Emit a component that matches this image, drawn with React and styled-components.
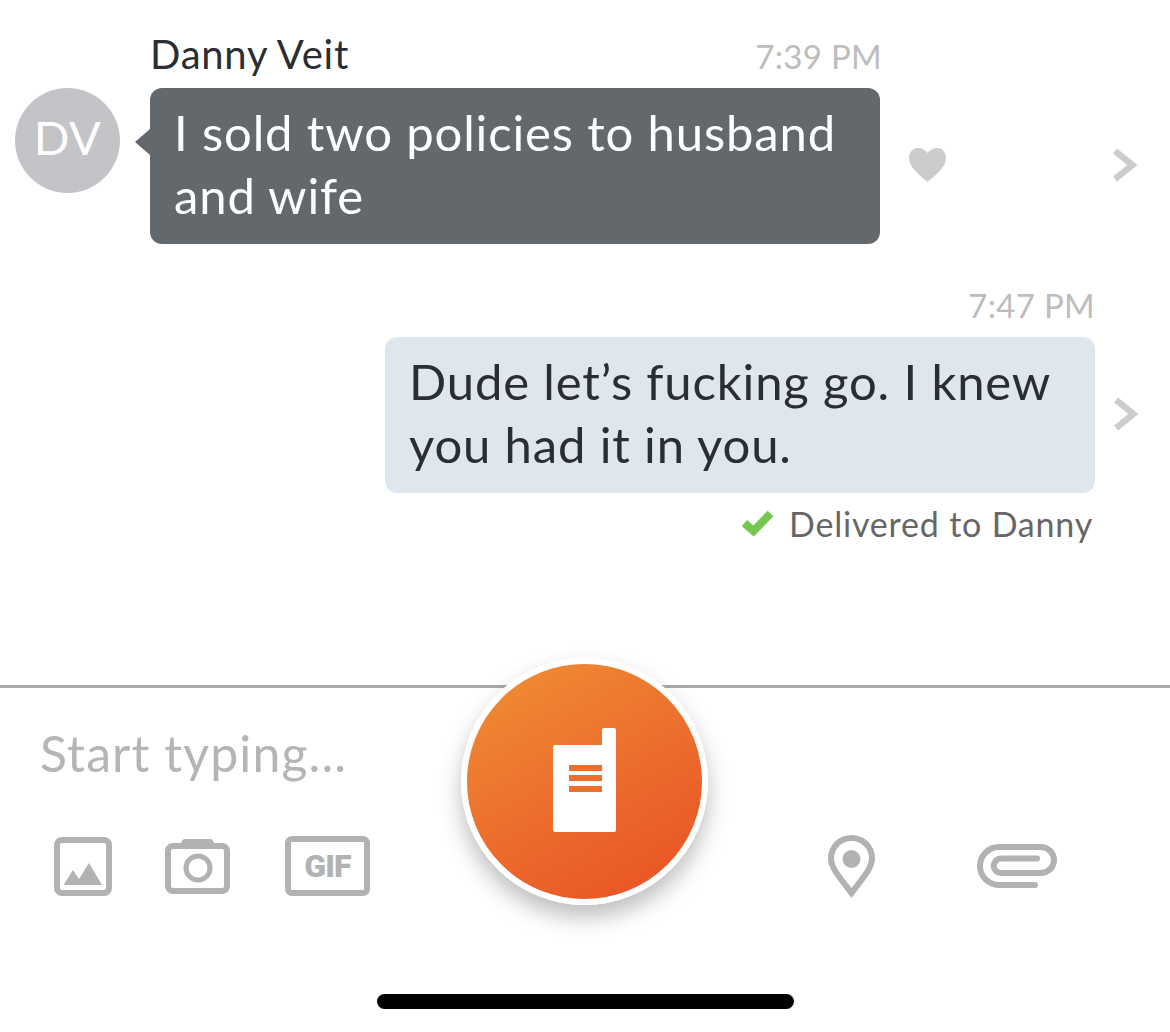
import React from "react";
import styled, { createGlobalStyle } from "styled-components";

const Global = createGlobalStyle`
  html, body { margin: 0; padding: 0; background: #fff; }
  body { font-family: "Lato", "Open Sans", sans-serif; }
`;

const Page = styled.div`
  width: 1170px;
  height: 1032px;
  display: flex;
  flex-direction: column;
  overflow: hidden;
  background: #fff;
`;

const Thread = styled.main`
  height: 685px;
  padding-top: 32px;
  box-sizing: border-box;
  display: flex;
  flex-direction: column;
`;

const MessageHead = styled.div`
  display: flex;
  justify-content: space-between;
  align-items: center;
  box-sizing: border-box;
  height: ${(p) => p.$height}px;
  width: ${(p) => p.$width}px;
  margin-left: ${(p) => p.$left}px;
  padding-bottom: ${(p) => p.$pad}px;
`;

const Name = styled.span`
  font-size: 40px;
  letter-spacing: 0.75px;
  color: #2a2e33;
  margin-left: -1px;
`;

const Time = styled.span`
  font-size: 33px;
  letter-spacing: 0.3px;
  color: #bdbdbd;
  margin: 4px -2px 0 auto;
`;

const Row = styled.div`
  display: flex;
  align-items: center;
  margin-left: ${(p) => p.$left}px;
  margin-bottom: ${(p) => p.$bottom || 0}px;
`;

const Avatar = styled.div`
  width: 105px;
  height: 105px;
  box-sizing: border-box;
  padding-bottom: 8px;
  border-radius: 50%;
  background: #c4c4c8;
  color: #fff;
  font-size: 47px;
  letter-spacing: 0.5px;
  font-weight: 400;
  display: flex;
  align-items: center;
  justify-content: center;
  align-self: flex-start;
  margin-right: 30px;
`;

const Bubble = styled.div`
  position: relative;
  box-sizing: border-box;
  width: ${(p) => p.$width}px;
  height: 156px;
  padding: 13px 24px;
  border-radius: 12px;
  font-size: 49px;
  line-height: 63px;
  letter-spacing: 0.85px;
  background: ${(p) => (p.$out ? "#e0e6ed" : "#63686d")};
  color: ${(p) => (p.$out ? "#2a2e33" : "#fff")};
  ${(p) =>
    !p.$out &&
    `&::before {
      content: "";
      position: absolute;
      left: -15px;
      top: 41px;
      border-style: solid;
      border-width: 13px 15px 13px 0;
      border-color: transparent #63686d transparent transparent;
    }`}
`;

const HeartSlot = styled.div`
  width: 37px;
  margin-left: 29px;
  height: 34px;
  margin-top: -2px;
`;

const ChevronSlot = styled.div`
  margin-left: ${(p) => p.$left}px;
  width: 24px;
  height: 34px;
  margin-top: -2px;
`;

const Receipt = styled.div`
  display: flex;
  align-items: center;
  justify-content: flex-end;
  gap: 16px;
  width: 1093px;
  height: 60px;
  font-size: 34px;
  letter-spacing: 0.8px;
  color: #666;
`;

const Composer = styled.footer`
  position: relative;
  flex: 1;
  border-top: 3px solid #aaa;
  display: flex;
  flex-direction: column;
`;

const Placeholder = styled.div`
  height: 147px;
  padding: 30px 0 0 40px;
  box-sizing: border-box;
  font-size: 50px;
  line-height: 70px;
  letter-spacing: 1.1px;
  color: #b5b5b5;
`;

const Toolbar = styled.div`
  display: flex;
  justify-content: space-between;
  align-items: center;
  height: 62px;
  padding: 0 113px 0 54px;
`;

const ToolGroup = styled.div`
  display: flex;
  align-items: center;
  gap: ${(p) => p.$gap}px;
`;

const GifBadge = styled.div`
  box-sizing: border-box;
  width: 85px;
  height: 60px;
  border: 6px solid #b2b2b2;
  border-radius: 7px;
  margin-left: 2px;
  display: flex;
  align-items: center;
  justify-content: center;
  font-family: "Roboto", sans-serif;
  font-weight: 900;
  font-size: 32px;
  letter-spacing: -0.8px;
  color: #b2b2b2;
`;

const RecordButton = styled.button`
  position: absolute;
  left: 461px;
  top: -30px;
  box-sizing: border-box;
  width: 247px;
  height: 247px;
  padding: 0 0 4px;
  border: 6px solid #fff;
  border-radius: 50%;
  background: linear-gradient(150deg, #ef8b33 8%, #ec6b2c 55%, #e95525 92%);
  box-shadow: 0 12px 22px rgba(0, 0, 0, 0.26);
  display: flex;
  align-items: center;
  justify-content: center;
`;

const HomeIndicator = styled.div`
  width: 417px;
  height: 15px;
  border-radius: 8px;
  background: #000;
  margin: 97px 0 0 377px;
`;

const Heart = () => (
  <svg width="37" height="34" viewBox="0 0 37 34" fill="#cccccc">
    <path d="M18.5 34C12 28 0 20 0 10C0 4 4 0 9 0C13 0 16.500 2 18.500 5C20.500 2 24 0 28 0C33 0 37 4 37 10C37 20 25 28 18.500 34Z" />
  </svg>
);

const Chevron = () => (
  <svg width="24" height="34" viewBox="0 0 24 34" fill="none" stroke="#cccccc" strokeWidth="6.500">
    <path d="M2 3L19.500 17L2 31" />
  </svg>
);

const Check = () => (
  <svg width="31" height="25" viewBox="0 0 31 25" fill="none" stroke="#76c74f" strokeWidth="8">
    <path d="M2.500 12L11.500 20L28.500 2.500" />
  </svg>
);

const ImageIcon = () => (
  <svg width="58" height="59" viewBox="0 0 58 59" fill="none">
    <rect x="3" y="3" width="52" height="53" rx="5" stroke="#b2b2b2" strokeWidth="6" />
    <path d="M9.500 48L19 33L25 42L35 26L48 48Z" fill="#b2b2b2" />
  </svg>
);

const CameraIcon = () => (
  <svg width="65" height="55" viewBox="0 0 65 55" fill="none">
    <path d="M16 5C16 2 18 0 20 0H45C47 0 49 2 49 5Z" fill="#b2b2b2" />
    <rect x="3" y="7" width="59" height="45" rx="5" stroke="#b2b2b2" strokeWidth="6" />
    <circle cx="33" cy="29" r="12" stroke="#b2b2b2" strokeWidth="5" />
  </svg>
);

const PinIcon = () => (
  <svg width="47" height="63" viewBox="0 0 47 63" fill="none">
    <path
      d="M23.500 58C14 45 3 34 3 23.500C3 12 12 3 23.500 3C35 3 44 12 44 23.500C44 34 33 45 23.500 58Z"
      stroke="#b2b2b2"
      strokeWidth="6"
    />
    <circle cx="23.500" cy="24" r="9" fill="#b2b2b2" />
  </svg>
);

const ClipIcon = () => (
  <svg width="80" height="44" viewBox="0 0 80 44" fill="none">
    <path
      d="M58 41H22A19 19 0 0 1 22 3H64A13 13 0 0 1 64 29H24A7.250 7.250 0 0 1 24 14.500H60"
      stroke="#b2b2b2"
      strokeWidth="6"
      strokeLinecap="round"
    />
  </svg>
);

const WalkieIcon = () => (
  <svg width="63" height="104" viewBox="0 0 63 104">
    <path
      d="M49 2C49 1 50 0 51 0H61C62 0 63 1 63 2V102C63 103 62 104 61 104H2C1 104 0 103 0 102V19C0 18 1 17 2 17H49Z"
      fill="#fff"
    />
    <rect x="16" y="37" width="33" height="6" fill="#ee6f2d" />
    <rect x="16" y="47" width="33" height="6" fill="#ee6f2d" />
    <rect x="16" y="58" width="33" height="6" fill="#ee6f2d" />
  </svg>
);

export default function App() {
  return (
    <Page>
      <Global />
      <Thread>
        <MessageHead $left={151} $width={729} $height={56} $pad={12}>
          <Name>Danny Veit</Name>
          <Time>7:39 PM</Time>
        </MessageHead>
        <Row $left={15} $bottom={28}>
          <Avatar>DV</Avatar>
          <Bubble $width={730}>I sold two policies to husband and wife</Bubble>
          <HeartSlot>
            <Heart />
          </HeartSlot>
          <ChevronSlot $left={167}>
            <Chevron />
          </ChevronSlot>
        </Row>
        <MessageHead $left={385} $width={708} $height={65} $pad={4}>
          <Time>7:47 PM</Time>
        </MessageHead>
        <Row $left={385}>
          <Bubble $out $width={710}>
            Dude let’s fucking go. I knew you had it in you.
          </Bubble>
          <ChevronSlot $left={19}>
            <Chevron />
          </ChevronSlot>
        </Row>
        <Receipt>
          <Check />
          Delivered to Danny
        </Receipt>
      </Thread>
      <Composer>
        <RecordButton aria-label="Record">
          <WalkieIcon />
        </RecordButton>
        <Placeholder>Start typing...</Placeholder>
        <Toolbar>
          <ToolGroup $gap={53}>
            <ImageIcon />
            <CameraIcon />
            <GifBadge>GIF</GifBadge>
          </ToolGroup>
          <ToolGroup $gap={102}>
            <PinIcon />
            <ClipIcon />
          </ToolGroup>
        </Toolbar>
        <HomeIndicator />
      </Composer>
    </Page>
  );
}
